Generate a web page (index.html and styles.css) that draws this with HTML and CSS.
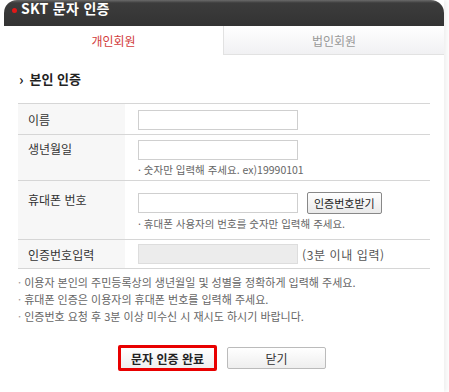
FILE: index.html
```html
<!DOCTYPE html>
<html lang="ko">
<head>
<meta charset="utf-8">
<link rel="stylesheet" href="styles.css">
</head>
<body>
<div class="popup">
  <div class="header">
    <span class="dot"></span>
    <h1 class="title">SKT 문자 인증</h1>
  </div>
  <div class="tabs">
    <div class="tab active">개인회원</div>
    <div class="tab">법인회원</div>
  </div>
  <div class="content">
    <h2 class="section"><span class="arrow">›</span>본인 인증</h2>
    <div class="form">
      <div class="row r1">
        <div class="label">이름</div>
        <div class="field"><span class="input"></span></div>
      </div>
      <div class="row r2">
        <div class="label">생년월일</div>
        <div class="field">
          <span class="input"></span>
          <p class="help">· 숫자만 입력해 주세요. ex)19990101</p>
        </div>
      </div>
      <div class="row r3">
        <div class="label">휴대폰 번호</div>
        <div class="field">
          <div class="line"><span class="input"></span><span class="btn-get">인증번호받기</span></div>
          <p class="help">· 휴대폰 사용자의 번호를 숫자만 입력해 주세요.</p>
        </div>
      </div>
      <div class="row r4">
        <div class="label">인증번호입력</div>
        <div class="field">
          <div class="line"><span class="input disabled"></span><span class="hint">(3분 이내 입력)</span></div>
        </div>
      </div>
    </div>
    <ul class="notes">
      <li>이용자 본인의 주민등록상의 생년월일 및 성별을 정확하게 입력해 주세요.</li>
      <li>휴대폰 인증은 이용자의 휴대폰 번호를 입력해 주세요.</li>
      <li>인증번호 요청 후 3분 이상 미수신 시 재시도 하시기 바랍니다.</li>
    </ul>
    <div class="actions">
      <span class="btn primary">문자 인증 완료</span>
      <span class="btn">닫기</span>
    </div>
  </div>
</div>
</body>
</html>
```

FILE: styles.css
```css
* { box-sizing: border-box; }
html, body { margin: 0; padding: 0; background: #fff; }
body {
  width: 449px;
  height: 392px;
  overflow: hidden;
  font-family: "Noto Sans CJK KR", "Noto Sans", sans-serif;
  color: #333;
}
.popup {
  margin-left: 4px;
  width: 440px;
  height: 392px;
  box-shadow: 3px 0 4px rgba(0,0,0,0.06);
}
.header {
  height: 26px;
  border-radius: 13px 13px 0 0;
  background: linear-gradient(#6a6a6a 0, #3c3c3c 3px, #333 26px);
  display: flex;
  align-items: flex-start;
  padding-left: 8px;
}
.dot {
  width: 5px;
  height: 5px;
  border-radius: 50%;
  background: #e01818;
  margin-top: 8px;
  margin-right: 4px;
}
.title {
  margin: 0;
  font-size: 14px;
  line-height: 16px;
  font-weight: bold;
  color: #fff;
  letter-spacing: 0.3px;
}
.tabs {
  display: flex;
  height: 29px;
}
.tab {
  flex: 1;
  display: flex;
  align-items: center;
  justify-content: center;
  font-size: 12px;
  color: #999;
  background: linear-gradient(#fff, #f1f1f3);
  border-left: 1px solid #e2e2e2;
  border-bottom: 1px solid #e2e2e2;
}
.tab.active {
  color: #d23c3c;
  background: #fff;
  border: none;
  flex: 0 0 219px;
}
.content {
  padding: 0 14px;
}
.section {
  margin: 16px 0 0 0;
  font-size: 13px;
  line-height: 16px;
  font-weight: bold;
  color: #222;
  display: flex;
  align-items: center;
}
.arrow {
  font-size: 14px;
  margin: 0 6px 0 1px;
  font-weight: bold;
}
.form {
  margin-top: 16px;
  border-top: 1px solid #d6d6d6;
  width: 412px;
}
.row {
  display: grid;
  grid-template-columns: 107px 1fr;
  border-bottom: 1px solid #d6d6d6;
}
.label {
  background: #f7f7f7;
  font-size: 12px;
  color: #333;
  padding-left: 10px;
  display: flex;
  align-items: center;
}
.r2 .label, .r3 .label { align-items: flex-start; }
.r2 .label { padding-top: 5px; }
.r3 .label { padding-top: 10px; }
.field {
  padding-left: 13px;
}
.r1 .field { padding-top: 6px; height: 30px; }
.r2 .field { padding-top: 5px; height: 45px; }
.r3 .field { padding-top: 11px; height: 58px; }
.r4 .field { padding-top: 4px; height: 28px; }
.input {
  display: block;
  width: 160px;
  height: 20px;
  border: 1px solid #cfcfcf;
  background: #fff;
}
.input.disabled { background: #ececec; border-color: #ddd; }
.line {
  display: flex;
  align-items: center;
}
.btn-get {
  margin-left: 9px;
  height: 22px;
  padding: 0 6px;
  border: 1px solid #888;
  border-radius: 2px;
  background: linear-gradient(#fff, #e9e9e9);
  font-size: 11px;
  line-height: 20px;
  color: #222;
}
.hint {
  margin-left: 4px;
  font-size: 12px;
  color: #555;
  letter-spacing: 0.6px;
}
.help {
  margin: 3px 0 0 0;
  font-size: 10.5px;
  line-height: 14px;
  color: #666;
}
.notes {
  list-style: none;
  margin: 5px 0 0 0;
  padding: 0;
  font-size: 11px;
  line-height: 17px;
  color: #666;
}
.notes li::before {
  content: "· ";
  color: #999;
}
.actions {
  display: flex;
  justify-content: center;
  align-items: center;
  gap: 10px;
  margin-top: 20px;
  padding-right: 4px;
}
.btn {
  width: 99px;
  height: 22px;
  border: 1px solid #bbb;
  border-radius: 2px;
  background: linear-gradient(#fff, #eee);
  font-size: 12px;
  color: #333;
  display: flex;
  align-items: center;
  justify-content: center;
}
.btn.primary {
  height: 26px;
  border: 3px solid #e80000;
  border-radius: 2px;
  font-weight: bold;
  color: #222;
}
```
